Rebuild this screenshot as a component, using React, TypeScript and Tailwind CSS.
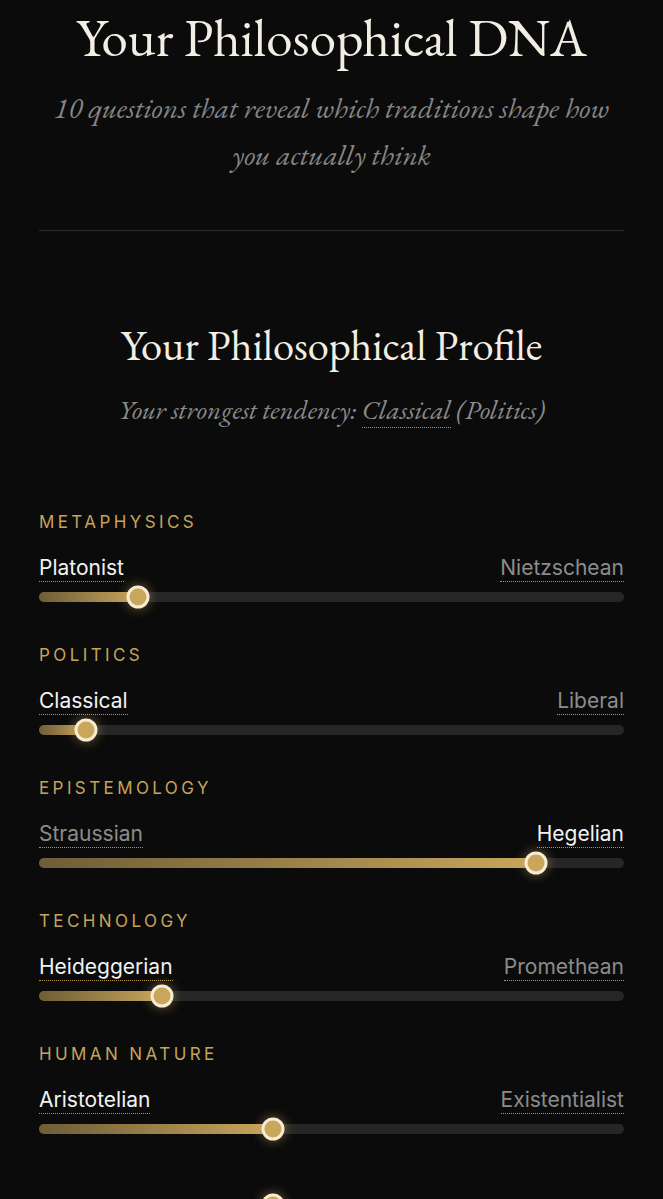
const serif = "font-['EB_Garamond','Liberation_Serif',serif]";
const sans = "font-['Inter','Liberation_Sans',sans-serif]";

interface Axis {
  name: string;
  left: string;
  right: string;
  value: number;
}

const axes: Axis[] = [
  { name: 'Metaphysics', left: 'Platonist', right: 'Nietzschean', value: 17 },
  { name: 'Politics', left: 'Classical', right: 'Liberal', value: 8 },
  { name: 'Epistemology', left: 'Straussian', right: 'Hegelian', value: 85 },
  { name: 'Technology', left: 'Heideggerian', right: 'Promethean', value: 21 },
  { name: 'Human Nature', left: 'Aristotelian', right: 'Existentialist', value: 40 },
];

function Track({ value }: { value: number }) {
  return (
    <div className="relative h-[10px] w-full rounded-full bg-[#262626]">
      <div
        className="absolute left-0 top-0 h-full rounded-full bg-gradient-to-r from-[#6e5d37] to-[#c9a65c]"
        style={{ width: `${value}%` }}
      />
      <div
        className="absolute top-1/2 h-[23px] w-[23px] -translate-x-1/2 -translate-y-1/2 rounded-full border-[3px] border-[#f6ecd4] bg-[#c9a65c] shadow-[0_0_12px_rgba(201,166,92,0.55)]"
        style={{ left: `${value}%` }}
      />
    </div>
  );
}

function AxisRow({ axis }: { axis: Axis }) {
  const leftWins = axis.value < 50;
  return (
    <section className="flex flex-col">
      <h3 className={`${sans} text-[17px] leading-6 tracking-[0.2em] uppercase text-[#c4a45c]`}>{axis.name}</h3>
      <div className={`${sans} mt-[22px] flex justify-between text-[21px] leading-[24px]`}>
        <span className={`border-b border-dotted border-[#b8974f] pb-[1px] ${leftWins ? 'text-[#f2f2f2]' : 'text-[#8c8c8c]'}`}>
          {axis.left}
        </span>
        <span className={`border-b border-dotted border-[#b8974f] pb-[1px] ${leftWins ? 'text-[#8c8c8c]' : 'text-[#f2f2f2]'}`}>
          {axis.right}
        </span>
      </div>
      <div className="mt-[10px]">
        <Track value={axis.value} />
      </div>
    </section>
  );
}

export default function App() {
  return (
    <main className="min-h-screen bg-[#0b0b0b] px-[39px] pb-10 overflow-hidden">
      <header className="pt-[8px] text-center">
        <h1 className={`${serif} text-[53px] leading-[60px] text-[#f3eee4]`}>Your Philosophical DNA</h1>
        <p className={`${serif} mt-[16px] italic text-[29.5px] leading-[47px] text-[#858585]`}>
          10 questions that reveal which traditions shape how
          <br />
          you actually think
        </p>
      </header>

      <hr className="mt-[52px] border-0 h-px bg-[#2c2c2c]" />

      <div className="mt-[89px] text-center">
        <h2 className={`${serif} text-[42.5px] leading-[50px] text-[#f3eee4]`}>Your Philosophical Profile</h2>
        <p className={`${serif} mt-[24px] italic text-[27px] leading-[32px] text-[#8a8a8a]`}>
          Your strongest tendency:{' '}
          <span className="border-b border-dotted border-[#b8974f]">Classical</span> (Politics)
        </p>
      </div>

      <div className="mt-[84px] flex flex-col gap-[41px]">
        {axes.map((a) => (
          <AxisRow key={a.name} axis={a} />
        ))}
        <div className="mt-[25px]">
          <Track value={40} />
        </div>
      </div>
    </main>
  );
}
